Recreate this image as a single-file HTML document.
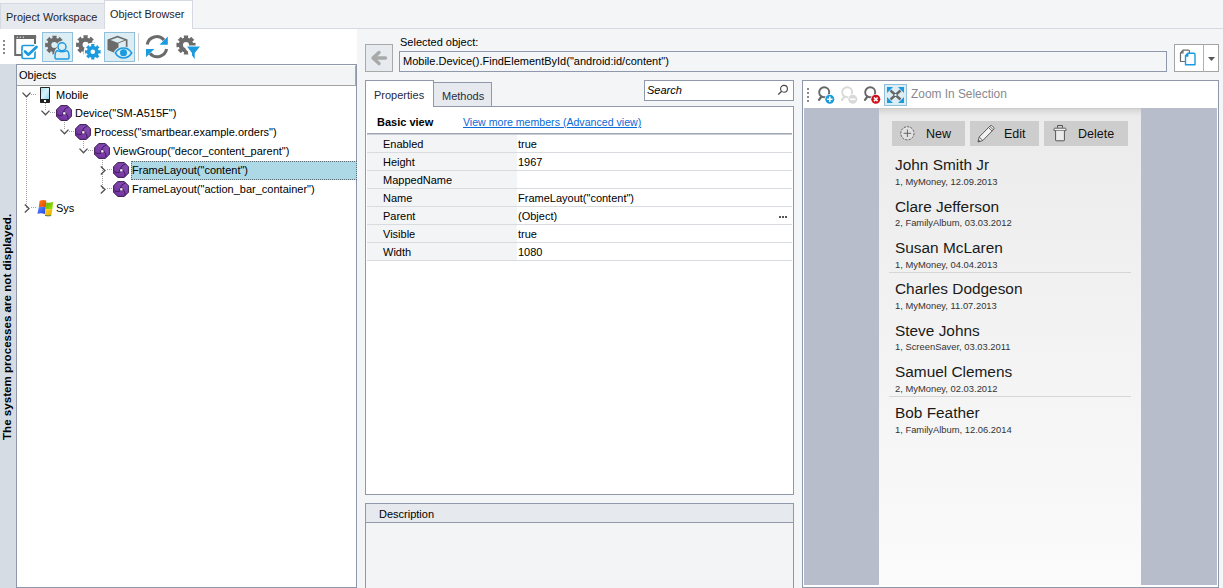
<!DOCTYPE html>
<html><head><meta charset="utf-8">
<style>
*{box-sizing:border-box;margin:0;padding:0}
html,body{width:1223px;height:588px;overflow:hidden}
body{position:relative;background:#f4f5f7;font-family:"Liberation Sans",sans-serif;font-size:11px;color:#000}
.a{position:absolute}
.t{position:absolute;white-space:nowrap;line-height:1}
svg{position:absolute;overflow:visible}
.pr{position:absolute;left:367px;width:425px;height:18px;border-bottom:1px solid #d8dbe0}
.pn{position:absolute;left:0;top:0;width:150px;height:17px;background:#f3f4f6}
.pk{position:absolute;left:16px;top:4px;white-space:nowrap;line-height:1}
.pv{position:absolute;left:151px;top:4px;white-space:nowrap;line-height:1}
.nm{position:absolute;left:895px;white-space:nowrap;line-height:1;font-size:15.4px;color:#1a1a1a}
.sb{position:absolute;left:895px;white-space:nowrap;line-height:1;font-size:9.4px;color:#333}
</style></head><body>

<!-- tab strip -->
<div class="a" style="left:0;top:28px;width:1223px;height:1px;background:#d5dae2"></div>
<div class="a" style="left:0;top:3px;width:104px;height:26px;background:#e6e9ee;border-left:1px solid #d5dae2;border-top:1px solid #d5dae2"></div>
<div class="t" style="left:6px;top:12px;font-size:10.9px;color:#1e1e2a">Project Workspace</div>
<div class="a" style="left:104px;top:0;width:89px;height:30px;background:#fff;border:1px solid #d5dae2;border-bottom:none"></div>
<div class="t" style="left:110px;top:9px;font-size:10.9px;color:#1e1e2a">Object Browser</div>

<!-- toolbar -->
<div class="a" style="left:0;top:29px;width:357px;height:35px;background:#fff"></div>
<!--TOOLBAR-->
<div class="a" style="left:3px;top:40px;width:2px;height:2px;background:#8a8a8a"></div>
<div class="a" style="left:3px;top:44px;width:2px;height:2px;background:#8a8a8a"></div>
<div class="a" style="left:3px;top:48px;width:2px;height:2px;background:#8a8a8a"></div>
<div class="a" style="left:3px;top:52px;width:2px;height:2px;background:#8a8a8a"></div>
<svg style="left:14px;top:35px" width="24" height="24" viewBox="0 0 24 24"><path d="M9,20 L1.2,20 L1.2,1 L21,1 L21,9" fill="none" stroke="#6b6b6b" stroke-width="2"/><rect x="0.2" y="0" width="22" height="4" rx="1" fill="#6b6b6b"/><circle cx="3.3" cy="2.2" r="0.6" fill="#fff"/><circle cx="6.3" cy="2.2" r="0.6" fill="#fff"/><circle cx="9.3" cy="2.2" r="0.6" fill="#fff"/><rect x="8" y="10.5" width="13" height="13" rx="1.5" fill="#fff" stroke="#1a9be0" stroke-width="1.7"/><path d="M22,10" fill="none"/><path d="M11,16.5 L14.3,19.8 L22.5,12" fill="none" stroke="#fff" stroke-width="5" stroke-linecap="round" stroke-linejoin="round"/><path d="M11,16.5 L14.3,19.8 L22.5,12" fill="none" stroke="#1a9be0" stroke-width="2.8" stroke-linecap="round" stroke-linejoin="round"/></svg>
<div class="a" style="left:42px;top:32px;width:31px;height:30px;background:#dcedf3;border:1px solid #92c0db"></div>
<svg style="left:45px;top:35px" width="26" height="26" viewBox="0 0 26 26"><path d="M7.63,2.94 L7.26,0.67 L11.74,0.67 L11.37,2.94 L13.17,3.69 L14.52,1.81 L17.69,4.98 L15.81,6.33 L16.56,8.13 L18.83,7.76 L18.83,12.24 L16.56,11.87 L15.81,13.67 L17.69,15.02 L14.52,18.19 L13.17,16.31 L11.37,17.06 L11.74,19.33 L7.26,19.33 L7.63,17.06 L5.83,16.31 L4.48,18.19 L1.31,15.02 L3.19,13.67 L2.44,11.87 L0.17,12.24 L0.17,7.76 L2.44,8.13 L3.19,6.33 L1.31,4.98 L4.48,1.81 L5.83,3.69Z" fill="#6b6b6b"/><circle cx="9.3" cy="10" r="3" fill="#dcedf3"/><path d="M17,6 C21,6 23,9 22.5,12.5 C25,14 26,17 26,20 L26,25.5 L9,25.5 L9,20 C9,17 10,14 12,12.5 C11.5,9 13,6 17,6Z" fill="#dcedf3"/><circle cx="17" cy="11.8" r="4" fill="#dcedf3" stroke="#1a9be0" stroke-width="1.5"/><path d="M12,15.5 C10.5,16.5 10,18.5 10,20.5 L10,22.5 Q10,24 11.5,24 L22.5,24 Q24,24 24,22.5 L24,20.5 C24,18.5 23.5,16.5 22,15.5 C20,17 14,17 12,15.5Z" fill="#dcedf3" stroke="#1a9be0" stroke-width="1.5" stroke-linejoin="round"/></svg>
<svg style="left:76px;top:35px" width="26" height="26" viewBox="0 0 26 26"><path d="M7.70,2.65 L7.31,0.27 L11.89,0.27 L11.50,2.65 L13.32,3.40 L14.72,1.44 L17.96,4.68 L16.00,6.08 L16.75,7.90 L19.13,7.51 L19.13,12.09 L16.75,11.70 L16.00,13.52 L17.96,14.92 L14.72,18.16 L13.32,16.20 L11.50,16.95 L11.89,19.33 L7.31,19.33 L7.70,16.95 L5.88,16.20 L4.48,18.16 L1.24,14.92 L3.20,13.52 L2.45,11.70 L0.07,12.09 L0.07,7.51 L2.45,7.90 L3.20,6.08 L1.24,4.68 L4.48,1.44 L5.88,3.40Z" fill="#6b6b6b"/><circle cx="9.6" cy="9.8" r="3" fill="#fff"/><circle cx="16.8" cy="16.8" r="9.3" fill="#fff"/><path d="M15.38,10.97 L15.09,8.99 L18.51,8.99 L18.22,10.97 L19.91,11.67 L21.11,10.06 L23.54,12.49 L21.93,13.69 L22.63,15.38 L24.61,15.09 L24.61,18.51 L22.63,18.22 L21.93,19.91 L23.54,21.11 L21.11,23.54 L19.91,21.93 L18.22,22.63 L18.51,24.61 L15.09,24.61 L15.38,22.63 L13.69,21.93 L12.49,23.54 L10.06,21.11 L11.67,19.91 L10.97,18.22 L8.99,18.51 L8.99,15.09 L10.97,15.38 L11.67,13.69 L10.06,12.49 L12.49,10.06 L13.69,11.67Z" fill="#1a9be0"/><circle cx="16.8" cy="16.8" r="2.3" fill="#fff"/></svg>
<div class="a" style="left:104px;top:32px;width:31px;height:30px;background:#dcedf3;border:1px solid #92c0db"></div>
<svg style="left:106px;top:35px" width="27" height="25" viewBox="0 0 27 25"><path d="M1.5,4.5 L11.5,0.8 L21.5,4.5 L21.5,15 L11.5,19 L1.5,15 Z" fill="#6b6b6b"/><path d="M4.5,5 L11.5,2.5 L18.5,5 L11.5,7.8 Z" fill="#dcedf3"/><path d="M12.5,8.3 L19.8,5.6 L19.8,14 L12.5,17 Z" fill="#dcedf3"/><ellipse cx="17.5" cy="18" rx="9.5" ry="6.5" fill="#dcedf3"/><path d="M9.3,18 C11.5,14.5 14.5,13 17.5,13 C20.5,13 23.5,14.5 25.7,18 C23.5,21.5 20.5,23 17.5,23 C14.5,23 11.5,21.5 9.3,18 Z" fill="#dcedf3" stroke="#1a9be0" stroke-width="1.5"/><circle cx="17.5" cy="17.8" r="3.5" fill="#1a9be0"/></svg>
<div class="a" style="left:138px;top:33px;width:1px;height:28px;background:#cfcfcf"></div>
<svg style="left:145px;top:35px" width="24" height="24" viewBox="0 0 24 24"><path d="M2.2,9.5 A9.6,9.6 0 0 1 19,5" fill="none" stroke="#6b6b6b" stroke-width="3.1"/><path d="M21.6,14 A9.6,9.6 0 0 1 5,18.5" fill="none" stroke="#6b6b6b" stroke-width="3.1"/><path d="M22.8,1.5 L22.8,9.8 L14.5,9.8 Z" fill="#1a9be0"/><path d="M1,14 L9.3,14 L1,22.3 Z" fill="#1a9be0"/></svg>
<svg style="left:176px;top:35px" width="26" height="26" viewBox="0 0 26 26"><path d="M8.10,2.85 L7.71,0.47 L12.29,0.47 L11.90,2.85 L13.72,3.60 L15.12,1.64 L18.36,4.88 L16.40,6.28 L17.15,8.10 L19.53,7.71 L19.53,12.29 L17.15,11.90 L16.40,13.72 L18.36,15.12 L15.12,18.36 L13.72,16.40 L11.90,17.15 L12.29,19.53 L7.71,19.53 L8.10,17.15 L6.28,16.40 L4.88,18.36 L1.64,15.12 L3.60,13.72 L2.85,11.90 L0.47,12.29 L0.47,7.71 L2.85,8.10 L3.60,6.28 L1.64,4.88 L4.88,1.64 L6.28,3.60Z" fill="#6b6b6b"/><circle cx="10" cy="10" r="3" fill="#fff"/><path d="M9.5,10.5 L25,10.5 L25,14 L18.5,20.5 L18.5,25 L15.5,21 L15.5,20.5 L9.5,14 Z" fill="#fff"/><path d="M11,11.5 L24,11.5 L18.7,18 L18.7,24 L16,20.5 L16,18 Z" fill="#1a9be0"/></svg>
<!--/TOOLBAR-->

<!-- left strip -->
<div class="a" style="left:0;top:64px;width:16px;height:524px;background:#d5dce4"></div>
<div class="t" style="left:8px;top:440px;font-size:11.6px;font-weight:bold;transform-origin:0 0;transform:rotate(-90deg) translate(0,-7px)">The system processes are not displayed.</div>

<!-- tree panel -->
<div class="a" style="left:16px;top:64px;width:341px;height:524px;background:#fff;border:1px solid #8e98aa"></div>
<div class="a" style="left:17px;top:65px;width:339px;height:21px;background:#f3f4f6;border-top:1px solid #fff;border-right:1px solid #a8a8a8;border-bottom:1px solid #a3a3a3"></div>
<div class="t" style="left:19px;top:70px">Objects</div>
<!--TREE-->
<div class="a" style="left:131px;top:161px;width:226px;height:19px;background:#add8e6;border:1px dotted #5a6a74"></div>
<div class="a" style="left:26px;top:99px;width:1px;height:109px;background:repeating-linear-gradient(#a3a3a3 0 1px,transparent 1px 2px)"></div>
<div class="a" style="left:45px;top:103px;width:1px;height:8px;background:repeating-linear-gradient(#a3a3a3 0 1px,transparent 1px 2px)"></div>
<div class="a" style="left:64px;top:122px;width:1px;height:8px;background:repeating-linear-gradient(#a3a3a3 0 1px,transparent 1px 2px)"></div>
<div class="a" style="left:83px;top:141px;width:1px;height:8px;background:repeating-linear-gradient(#a3a3a3 0 1px,transparent 1px 2px)"></div>
<div class="a" style="left:102px;top:160px;width:1px;height:30px;background:repeating-linear-gradient(#a3a3a3 0 1px,transparent 1px 2px)"></div>
<svg style="left:22px;top:92px" width="9" height="6" viewBox="0 0 9 6"><path d="M0.5,0.6 L4.5,4.8 L8.5,0.6" fill="none" stroke="#505050" stroke-width="1.3"/></svg>
<div class="a" style="left:31px;top:94px;width:6px;height:1px;background:repeating-linear-gradient(90deg,#a3a3a3 0 1px,transparent 1px 2px)"></div>
<svg style="left:40px;top:87px" width="10" height="16" viewBox="0 0 10 16"><defs><linearGradient id="ph" x1="0" y1="0" x2="1" y2="1"><stop offset="0" stop-color="#a9e3f5"/><stop offset="0.5" stop-color="#d8f3fb"/><stop offset="1" stop-color="#8fd6ee"/></linearGradient></defs><rect x="0" y="0" width="10" height="16" rx="0.8" fill="#222"/><rect x="1" y="1" width="8" height="11" fill="url(#ph)"/><rect x="4" y="13" width="2" height="2" fill="#fff"/></svg>
<div class="t" style="left:56px;top:90px">Mobile</div>
<svg style="left:41px;top:110px" width="9" height="6" viewBox="0 0 9 6"><path d="M0.5,0.6 L4.5,4.8 L8.5,0.6" fill="none" stroke="#505050" stroke-width="1.3"/></svg>
<div class="a" style="left:50px;top:112px;width:6px;height:1px;background:repeating-linear-gradient(90deg,#a3a3a3 0 1px,transparent 1px 2px)"></div>
<svg style="left:56px;top:105px" width="16" height="16" viewBox="0 0 16 16"><defs><linearGradient id="og" x1="0" y1="1" x2="1" y2="0"><stop offset="0" stop-color="#6f2e9c"/><stop offset="1" stop-color="#8a52b6"/></linearGradient></defs><polygon points="4.7,0.6 11.3,0.6 15.4,4.7 15.4,11.3 11.3,15.4 4.7,15.4 0.6,11.3 0.6,4.7" fill="url(#og)" stroke="#2a0c42" stroke-width="0.9"/><path d="M12.2,2.4 C9.5,2.8 7.8,4.6 7.6,7.3 M1.6,9.6 C3.6,11.2 6.4,10.8 7.6,9 M9.6,8.4 C11.6,9.6 12.3,11.8 11.8,14" fill="none" stroke="#35124f" stroke-width="0.85"/><circle cx="8.3" cy="8.3" r="1.9" fill="#35124f"/><rect x="7.2" y="7.2" width="2.3" height="2.3" fill="#fff"/></svg>
<div class="t" style="left:75px;top:108px">Device("SM-A515F")</div>
<svg style="left:60px;top:129px" width="9" height="6" viewBox="0 0 9 6"><path d="M0.5,0.6 L4.5,4.8 L8.5,0.6" fill="none" stroke="#505050" stroke-width="1.3"/></svg>
<div class="a" style="left:69px;top:131px;width:6px;height:1px;background:repeating-linear-gradient(90deg,#a3a3a3 0 1px,transparent 1px 2px)"></div>
<svg style="left:75px;top:124px" width="16" height="16" viewBox="0 0 16 16"><defs><linearGradient id="og" x1="0" y1="1" x2="1" y2="0"><stop offset="0" stop-color="#6f2e9c"/><stop offset="1" stop-color="#8a52b6"/></linearGradient></defs><polygon points="4.7,0.6 11.3,0.6 15.4,4.7 15.4,11.3 11.3,15.4 4.7,15.4 0.6,11.3 0.6,4.7" fill="url(#og)" stroke="#2a0c42" stroke-width="0.9"/><path d="M12.2,2.4 C9.5,2.8 7.8,4.6 7.6,7.3 M1.6,9.6 C3.6,11.2 6.4,10.8 7.6,9 M9.6,8.4 C11.6,9.6 12.3,11.8 11.8,14" fill="none" stroke="#35124f" stroke-width="0.85"/><circle cx="8.3" cy="8.3" r="1.9" fill="#35124f"/><rect x="7.2" y="7.2" width="2.3" height="2.3" fill="#fff"/></svg>
<div class="t" style="left:94px;top:127px">Process("smartbear.example.orders")</div>
<svg style="left:79px;top:148px" width="9" height="6" viewBox="0 0 9 6"><path d="M0.5,0.6 L4.5,4.8 L8.5,0.6" fill="none" stroke="#505050" stroke-width="1.3"/></svg>
<div class="a" style="left:88px;top:150px;width:6px;height:1px;background:repeating-linear-gradient(90deg,#a3a3a3 0 1px,transparent 1px 2px)"></div>
<svg style="left:94px;top:143px" width="16" height="16" viewBox="0 0 16 16"><defs><linearGradient id="og" x1="0" y1="1" x2="1" y2="0"><stop offset="0" stop-color="#6f2e9c"/><stop offset="1" stop-color="#8a52b6"/></linearGradient></defs><polygon points="4.7,0.6 11.3,0.6 15.4,4.7 15.4,11.3 11.3,15.4 4.7,15.4 0.6,11.3 0.6,4.7" fill="url(#og)" stroke="#2a0c42" stroke-width="0.9"/><path d="M12.2,2.4 C9.5,2.8 7.8,4.6 7.6,7.3 M1.6,9.6 C3.6,11.2 6.4,10.8 7.6,9 M9.6,8.4 C11.6,9.6 12.3,11.8 11.8,14" fill="none" stroke="#35124f" stroke-width="0.85"/><circle cx="8.3" cy="8.3" r="1.9" fill="#35124f"/><rect x="7.2" y="7.2" width="2.3" height="2.3" fill="#fff"/></svg>
<div class="t" style="left:113px;top:146px">ViewGroup("decor_content_parent")</div>
<svg style="left:100px;top:166px" width="6" height="9" viewBox="0 0 6 9"><path d="M0.8,0.5 L5,4.5 L0.8,8.5" fill="none" stroke="#505050" stroke-width="1.3"/></svg>
<div class="a" style="left:107px;top:169px;width:6px;height:1px;background:repeating-linear-gradient(90deg,#a3a3a3 0 1px,transparent 1px 2px)"></div>
<svg style="left:113px;top:162px" width="16" height="16" viewBox="0 0 16 16"><defs><linearGradient id="og" x1="0" y1="1" x2="1" y2="0"><stop offset="0" stop-color="#6f2e9c"/><stop offset="1" stop-color="#8a52b6"/></linearGradient></defs><polygon points="4.7,0.6 11.3,0.6 15.4,4.7 15.4,11.3 11.3,15.4 4.7,15.4 0.6,11.3 0.6,4.7" fill="url(#og)" stroke="#2a0c42" stroke-width="0.9"/><path d="M12.2,2.4 C9.5,2.8 7.8,4.6 7.6,7.3 M1.6,9.6 C3.6,11.2 6.4,10.8 7.6,9 M9.6,8.4 C11.6,9.6 12.3,11.8 11.8,14" fill="none" stroke="#35124f" stroke-width="0.85"/><circle cx="8.3" cy="8.3" r="1.9" fill="#35124f"/><rect x="7.2" y="7.2" width="2.3" height="2.3" fill="#fff"/></svg>
<div class="t" style="left:132px;top:165px">FrameLayout("content")</div>
<svg style="left:100px;top:185px" width="6" height="9" viewBox="0 0 6 9"><path d="M0.8,0.5 L5,4.5 L0.8,8.5" fill="none" stroke="#505050" stroke-width="1.3"/></svg>
<div class="a" style="left:107px;top:188px;width:6px;height:1px;background:repeating-linear-gradient(90deg,#a3a3a3 0 1px,transparent 1px 2px)"></div>
<svg style="left:113px;top:181px" width="16" height="16" viewBox="0 0 16 16"><defs><linearGradient id="og" x1="0" y1="1" x2="1" y2="0"><stop offset="0" stop-color="#6f2e9c"/><stop offset="1" stop-color="#8a52b6"/></linearGradient></defs><polygon points="4.7,0.6 11.3,0.6 15.4,4.7 15.4,11.3 11.3,15.4 4.7,15.4 0.6,11.3 0.6,4.7" fill="url(#og)" stroke="#2a0c42" stroke-width="0.9"/><path d="M12.2,2.4 C9.5,2.8 7.8,4.6 7.6,7.3 M1.6,9.6 C3.6,11.2 6.4,10.8 7.6,9 M9.6,8.4 C11.6,9.6 12.3,11.8 11.8,14" fill="none" stroke="#35124f" stroke-width="0.85"/><circle cx="8.3" cy="8.3" r="1.9" fill="#35124f"/><rect x="7.2" y="7.2" width="2.3" height="2.3" fill="#fff"/></svg>
<div class="t" style="left:132px;top:184px">FrameLayout("action_bar_container")</div>
<svg style="left:24px;top:204px" width="6" height="9" viewBox="0 0 6 9"><path d="M0.8,0.5 L5,4.5 L0.8,8.5" fill="none" stroke="#505050" stroke-width="1.3"/></svg>
<div class="a" style="left:31px;top:207px;width:6px;height:1px;background:repeating-linear-gradient(90deg,#a3a3a3 0 1px,transparent 1px 2px)"></div>
<svg style="left:37px;top:199px" width="17" height="17" viewBox="0 0 17 17"><defs><linearGradient id="wo" x1="0" y1="0" x2="1" y2="1"><stop offset="0" stop-color="#ff7a1a"/><stop offset="1" stop-color="#e24800"/></linearGradient><linearGradient id="wg" x1="0" y1="0" x2="1" y2="1"><stop offset="0" stop-color="#5fae00"/><stop offset="1" stop-color="#98ee00"/></linearGradient><linearGradient id="wb" x1="0" y1="0" x2="1" y2="1"><stop offset="0" stop-color="#5a8cff"/><stop offset="1" stop-color="#2040e0"/></linearGradient><linearGradient id="wy" x1="0" y1="0" x2="1" y2="1"><stop offset="0" stop-color="#ffd21a"/><stop offset="1" stop-color="#e8a800"/></linearGradient></defs><path d="M2.6,1.8 Q5.5,0.4 9.3,1.4 L8.8,8.3 Q5.5,7.4 1.8,8.2 Z" fill="url(#wo)"/><path d="M9.3,3.4 Q12.5,4.2 16,3 L15.4,10 Q12.2,10.8 8.8,9.8 Z" fill="url(#wg)"/><path d="M1.8,8.2 Q5,7.4 8.8,8.3 L8,15 Q4.2,13.8 0.4,14.8 Z" fill="url(#wb)"/><path d="M8.8,9.8 Q12.2,10.8 15.4,10 L14.2,16.6 Q10.8,17.4 8,16.4 Z" fill="url(#wy)"/><path d="M8,16.4 Q10.8,17.4 14.2,16.6" fill="none" stroke="#2b6a3a" stroke-width="0.8"/></svg>
<div class="t" style="left:56px;top:203px">Sys</div>
<!--/TREE-->

<!-- right: selected object -->
<div class="a" style="left:365px;top:44px;width:28px;height:28px;background:#e7eaee;border:1px solid #a9a9a9"></div>
<div class="t" style="left:400px;top:37px">Selected object:</div>
<div class="a" style="left:399px;top:51px;width:768px;height:21px;background:#f4f5f7;border:1px solid #9099ab"></div>
<div class="t" style="left:403px;top:56px">Mobile.Device().FindElementById("android:id/content")</div>
<div class="a" style="left:1174px;top:44px;width:45px;height:28px;background:#fff;border:1px solid #a4a4a4"></div>
<div class="a" style="left:1203px;top:44px;width:1px;height:28px;background:#b0b0b0"></div>

<!-- properties tabs -->
<div class="a" style="left:365px;top:106px;width:429px;height:389px;background:#fff;border:1px solid #9099ab"></div>
<div class="a" style="left:433px;top:82px;width:59px;height:25px;background:#e6e9ee;border:1px solid #9099ab"></div>
<div class="t" style="left:442px;top:91px;color:#2a2a3a">Methods</div>
<div class="a" style="left:365px;top:80px;width:69px;height:27px;background:#fff;border:1px solid #9099ab;border-bottom:none"></div>
<div class="t" style="left:374px;top:90px;color:#2a2a3a">Properties</div>
<div class="a" style="left:644px;top:80px;width:150px;height:21px;background:#fff;border:1px solid #9099ab"></div>
<div class="t" style="left:647px;top:85px;font-style:italic">Search</div>

<div class="t" style="left:377px;top:117px;font-weight:bold">Basic view</div>
<div class="t" style="left:463px;top:117px;color:#0a6ad6;text-decoration:underline;font-size:10.6px">View more members (Advanced view)</div>

<div class="a" style="left:367px;top:133px;width:425px;height:2px;background:linear-gradient(#9ea6b4 0 1px,#c9ced6 1px)"></div>
<div class="pr" style="top:135px"><div class="pn"></div><div class="pk">Enabled</div><div class="pv">true</div></div>
<div class="pr" style="top:153px"><div class="pn"></div><div class="pk">Height</div><div class="pv">1967</div></div>
<div class="pr" style="top:171px"><div class="pn"></div><div class="pk">MappedName</div><div class="pv"></div></div>
<div class="pr" style="top:189px"><div class="pn"></div><div class="pk">Name</div><div class="pv">FrameLayout("content")</div></div>
<div class="pr" style="top:207px"><div class="pn"></div><div class="pk">Parent</div><div class="pv">(Object)</div><div class="a" style="left:412px;top:9px;width:2px;height:2px;background:#555"></div><div class="a" style="left:415px;top:9px;width:2px;height:2px;background:#555"></div><div class="a" style="left:418px;top:9px;width:2px;height:2px;background:#555"></div></div>
<div class="pr" style="top:225px"><div class="pn"></div><div class="pk">Visible</div><div class="pv">true</div></div>
<div class="pr" style="top:243px"><div class="pn"></div><div class="pk">Width</div><div class="pv">1080</div></div>

<!-- description -->
<div class="a" style="left:365px;top:503px;width:429px;height:90px;background:#f3f4f6;border:1px solid #9099ab"></div>
<div class="a" style="left:366px;top:504px;width:427px;height:19px;background:#e6e9ee;border-bottom:1px solid #9099ab"></div>
<div class="t" style="left:379px;top:509px">Description</div>

<!-- screen panel -->
<div class="a" style="left:802px;top:80px;width:417px;height:508px;background:#fff;border:1px solid #8e98aa"></div>
<div class="a" style="left:804px;top:108px;width:413px;height:477px;background:#b7bdcb"></div>
<div class="a" style="left:879px;top:108px;width:262px;height:477px;background:linear-gradient(#ebebeb,#fbfbfb)"></div>
<div class="a" style="left:879px;top:108px;width:262px;height:8px;background:linear-gradient(rgba(60,40,20,0.16) 0 1px,rgba(0,0,0,0.09) 1px,rgba(0,0,0,0) 8px)"></div>
<div class="t" style="left:911px;top:89px;font-size:11.9px;color:#888890">Zoom In Selection</div>
<!--SCREENTB-->
<div class="a" style="left:807px;top:88px;width:2px;height:2px;background:#8a8a8a"></div>
<div class="a" style="left:807px;top:92px;width:2px;height:2px;background:#8a8a8a"></div>
<div class="a" style="left:807px;top:96px;width:2px;height:2px;background:#8a8a8a"></div>
<div class="a" style="left:807px;top:100px;width:2px;height:2px;background:#8a8a8a"></div>
<svg style="left:817px;top:86px" width="20" height="20" viewBox="0 0 20 20"><circle cx="7.2" cy="6.3" r="5" fill="none" stroke="#666" stroke-width="1.9"/><path d="M4.5,10.5 L2,13.8" stroke="#666" stroke-width="2.2" stroke-linecap="round"/><circle cx="12.8" cy="13.3" r="5.3" fill="#fff"/><circle cx="12.8" cy="13.3" r="4.5" fill="#1a9be0"/><path d="M12.8,10.6 V16 M10.1,13.3 H15.5" stroke="#fff" stroke-width="1.6"/></svg>
<svg style="left:840px;top:86px" width="20" height="20" viewBox="0 0 20 20"><circle cx="7.2" cy="6.3" r="5" fill="none" stroke="#d9d9d9" stroke-width="1.9"/><path d="M4.5,10.5 L2,13.8" stroke="#d9d9d9" stroke-width="2.2" stroke-linecap="round"/><circle cx="12.8" cy="13.3" r="5.3" fill="#fff"/><circle cx="12.8" cy="13.3" r="4.5" fill="#d9d9d9"/><path d="M10.1,13.3 H15.5" stroke="#fff" stroke-width="1.6"/></svg>
<svg style="left:863px;top:86px" width="20" height="20" viewBox="0 0 20 20"><circle cx="7.2" cy="6.3" r="5" fill="none" stroke="#666" stroke-width="1.9"/><path d="M4.5,10.5 L2,13.8" stroke="#666" stroke-width="2.2" stroke-linecap="round"/><circle cx="12.8" cy="13.3" r="5.3" fill="#fff"/><circle cx="12.8" cy="13.3" r="4.5" fill="#d0101b"/><path d="M11,11.5 L14.6,15.1 M14.6,11.5 L11,15.1" stroke="#fff" stroke-width="1.6"/></svg>
<div class="a" style="left:884px;top:84px;width:23px;height:22px;background:#dcedf3;border:1px solid #92c0db"></div>
<svg style="left:887px;top:87px" width="17" height="16" viewBox="0 0 17 16"><path d="M0,0 L6,0 L0,6Z M17,0 L11,0 L17,6Z M0,16 L6,16 L0,10Z M17,16 L11,16 L17,10Z" fill="#1a9be0"/><path d="M3.5,3.5 L13.5,12.5 M13.5,3.5 L3.5,12.5" stroke="#666" stroke-width="2.4"/><rect x="7" y="6.5" width="3" height="3" fill="#dcedf3" stroke="#666" stroke-width="1"/></svg>
<svg style="left:371px;top:51px" width="16" height="14" viewBox="0 0 16 14"><path d="M8,1.5 L2,7 L8,12.5 M2.5,7 L14.5,7" fill="none" stroke="#a9a9a9" stroke-width="3.4" stroke-linecap="round" stroke-linejoin="round"/></svg>
<svg style="left:1179px;top:49px" width="20" height="18" viewBox="0 0 20 18"><path d="M4,1.2 L9.2,1.2 Q10.5,1.2 10.5,2.5 L10.5,12.5 L1.5,12.5 L1.5,4 Z M1.8,4 L4,4 L4,1.5" fill="#fff" stroke="#6b6b6b" stroke-width="1.2" stroke-linejoin="round"/><path d="M8.8,4.3 L14.8,4.3 Q16,4.3 16,5.5 L16,15.8 L6.5,15.8 L6.5,6.8 Z M6.8,7 L8.8,7 L8.8,4.5" fill="#fff" stroke="#1a9be0" stroke-width="1.4" stroke-linejoin="round"/></svg>
<svg style="left:1208px;top:57px" width="7" height="4" viewBox="0 0 7 4"><path d="M0,0 L7,0 L3.5,4Z" fill="#555"/></svg>
<svg style="left:777px;top:84px" width="12" height="12" viewBox="0 0 12 12"><circle cx="7" cy="4.8" r="3.4" fill="none" stroke="#444" stroke-width="1.1"/><path d="M4.6,7.2 L1.2,10.6" stroke="#444" stroke-width="1.3"/></svg>
<!--/SCREENTB-->

<div class="a" style="left:892px;top:121px;width:73px;height:25px;background:#cdcdcd"></div>
<div class="a" style="left:970px;top:121px;width:69px;height:25px;background:#cdcdcd"></div>
<div class="a" style="left:1044px;top:121px;width:84px;height:25px;background:#cdcdcd"></div>
<div class="t" style="left:926px;top:128px;font-size:12.5px;color:#111">New</div>
<div class="t" style="left:1004px;top:128px;font-size:12.5px;color:#111">Edit</div>
<div class="t" style="left:1078px;top:128px;font-size:12.5px;color:#111">Delete</div>
<!--PHONEICONS-->
<svg style="left:899px;top:125px" width="17" height="17" viewBox="0 0 17 17"><circle cx="8.4" cy="8.3" r="6.6" fill="#e2e2e2" stroke="#5a5a5a" stroke-width="1" stroke-dasharray="2.2 1.2"/><path d="M8.4,4.5 V12 M4.6,8.3 H12.2" stroke="#5a5a5a" stroke-width="0.9"/></svg>
<svg style="left:977px;top:124px" width="18" height="19" viewBox="0 0 18 19"><path d="M1,18 L2.2,13 L13,2 Q14.2,0.9 15.5,2.2 L16.5,3.2 Q17.6,4.5 16.5,5.6 L5.8,16.5 Z" fill="#f2f2f2" stroke="#5a5a5a" stroke-width="1"/><path d="M2.2,13 L5.8,16.5 M11.5,3.5 L15,7 M12.8,2.3 L16.3,5.8" stroke="#5a5a5a" stroke-width="0.9" fill="none"/><path d="M1,18 L1.6,15.5 L3.5,17.4Z" fill="#555"/></svg>
<svg style="left:1053px;top:124px" width="14" height="18" viewBox="0 0 14 18"><path d="M4.5,3.8 L4.5,1.5 L9.5,1.5 L9.5,3.8" fill="none" stroke="#555" stroke-width="1"/><path d="M1.5,4.2 L12.5,4.2 Q13,4.3 13,5 L13,6.6 L1,6.6 L1,5 Q1,4.3 1.5,4.2Z" fill="#efefef" stroke="#555" stroke-width="0.9"/><path d="M2.6,6.8 L2.6,16.3 Q2.6,16.8 3.2,16.8 L10.8,16.8 Q11.4,16.8 11.4,16.3 L11.4,6.8" fill="#ebebeb" stroke="#555" stroke-width="1"/></svg>
<!--/PHONEICONS-->

<div class="nm" style="top:157px">John Smith Jr</div><div class="sb" style="top:177px">1, MyMoney, 12.09.2013</div>
<div class="nm" style="top:199px">Clare Jefferson</div><div class="sb" style="top:218px">2, FamilyAlbum, 03.03.2012</div>
<div class="nm" style="top:240px">Susan McLaren</div><div class="sb" style="top:260px">1, MyMoney, 04.04.2013</div>
<div class="a" style="left:889px;top:272px;width:242px;height:1px;background:#d6d6d6"></div>
<div class="nm" style="top:281px">Charles Dodgeson</div><div class="sb" style="top:301px">1, MyMoney, 11.07.2013</div>
<div class="nm" style="top:323px">Steve Johns</div><div class="sb" style="top:342px">1, ScreenSaver, 03.03.2011</div>
<div class="nm" style="top:364px">Samuel Clemens</div><div class="sb" style="top:384px">2, MyMoney, 02.03.2012</div>
<div class="a" style="left:889px;top:396px;width:242px;height:1px;background:#d6d6d6"></div>
<div class="nm" style="top:405px">Bob Feather</div><div class="sb" style="top:425px">1, FamilyAlbum, 12.06.2014</div>

</body></html>
